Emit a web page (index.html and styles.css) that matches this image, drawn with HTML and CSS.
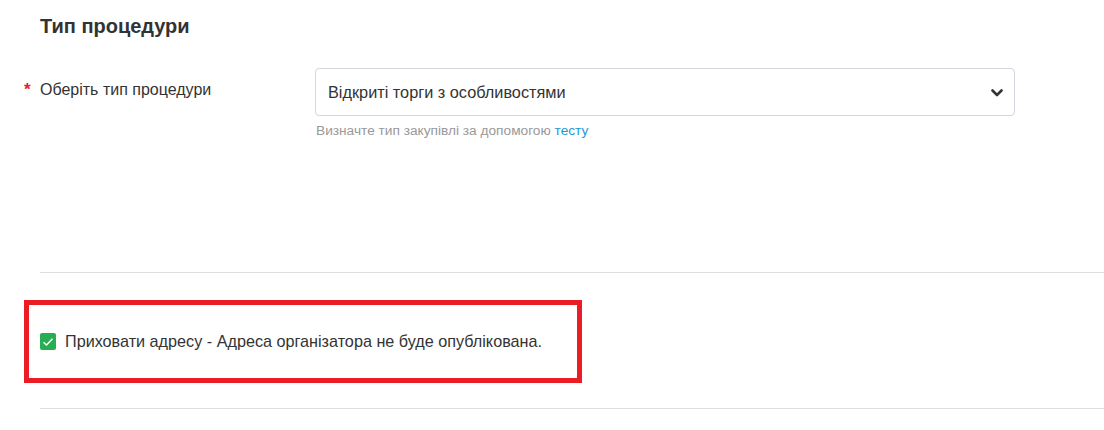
FILE: index.html
```html
<!DOCTYPE html>
<html lang="uk">
<head>
<meta charset="utf-8">
<link rel="stylesheet" href="styles.css">
</head>
<body>
<div class="page">
  <h2 class="title">Тип процедури</h2>
  <div class="row">
    <div class="label"><span class="req">*</span>Оберіть тип процедури</div>
    <div class="field">
      <div class="select">
        <span>Відкриті торги з особливостями</span>
        <svg class="chev" width="12" height="8" viewBox="0 0 12 8"><path d="M1.5 1.5 L6 6 L10.5 1.5" fill="none" stroke="#333" stroke-width="2.6" stroke-linecap="round" stroke-linejoin="round"/></svg>
      </div>
      <div class="hint">Визначте тип закупівлі за допомогою <a href="#">тесту</a></div>
    </div>
  </div>
  <hr class="divider first">
  <div class="highlight">
    <label class="check">
      <span class="box"><svg width="12" height="10" viewBox="0 0 12 10"><path d="M1.5 5.2 L4.5 8 L10.5 1.8" fill="none" stroke="#fff" stroke-width="1.5"/></svg></span>
      <span>Приховати адресу - Адреса організатора не буде опублікована.</span>
    </label>
  </div>
  <hr class="divider second">
</div>
</body>
</html>
```
FILE: styles.css
```css
* { box-sizing: border-box; }
html, body { margin: 0; padding: 0; background: #fff; }
body { font-family: "Liberation Sans", Arial, sans-serif; color: #333; }
.page { width: 1104px; height: 430px; overflow: hidden; }
.title {
  margin: 0;
  padding: 13px 0 0 40px;
  font-size: 20px;
  line-height: 26px;
  font-weight: bold;
  color: #333;
}
.row {
  display: flex;
  margin-top: 29px;
  padding-left: 24px;
}
.label {
  width: 291px;
  font-size: 16px;
  line-height: 20px;
  padding-top: 12px;
  color: #333;
}
.req {
  color: #e8202a;
  font-weight: bold;
  font-size: 17px;
  display: inline-block;
  width: 16px;
}
.field { width: 700px; }
.select {
  height: 48px;
  border: 1px solid #d3d6dc;
  border-radius: 4px;
  display: flex;
  align-items: center;
  justify-content: space-between;
  padding: 0 11px 0 12px;
  font-size: 16.3px;
  color: #333;
}
.chev { margin-top: 1px; }
.hint {
  margin-top: 7px;
  font-size: 13.7px;
  color: #999;
  padding-left: 1px;
}
.hint a { color: #1b9ad8; text-decoration: none; }
.divider {
  margin: 0 0 0 40px;
  border: 0;
  border-top: 1px solid #ddd;
  height: 0;
}
.first { margin-top: 134px; }
.highlight {
  margin: 27px 0 0 24px;
  width: 558px;
  height: 83px;
  border: 5px solid #ec1c24;
  display: flex;
  align-items: center;
  padding-left: 11px;
}
.check {
  display: flex;
  align-items: center;
  font-size: 16.2px;
  color: #333;
}
.box {
  width: 16px;
  height: 17px;
  background: #27ae52;
  border-radius: 2px;
  display: flex;
  align-items: center;
  justify-content: center;
  margin-right: 9px;
}
.second { margin-top: 25px; }
```
